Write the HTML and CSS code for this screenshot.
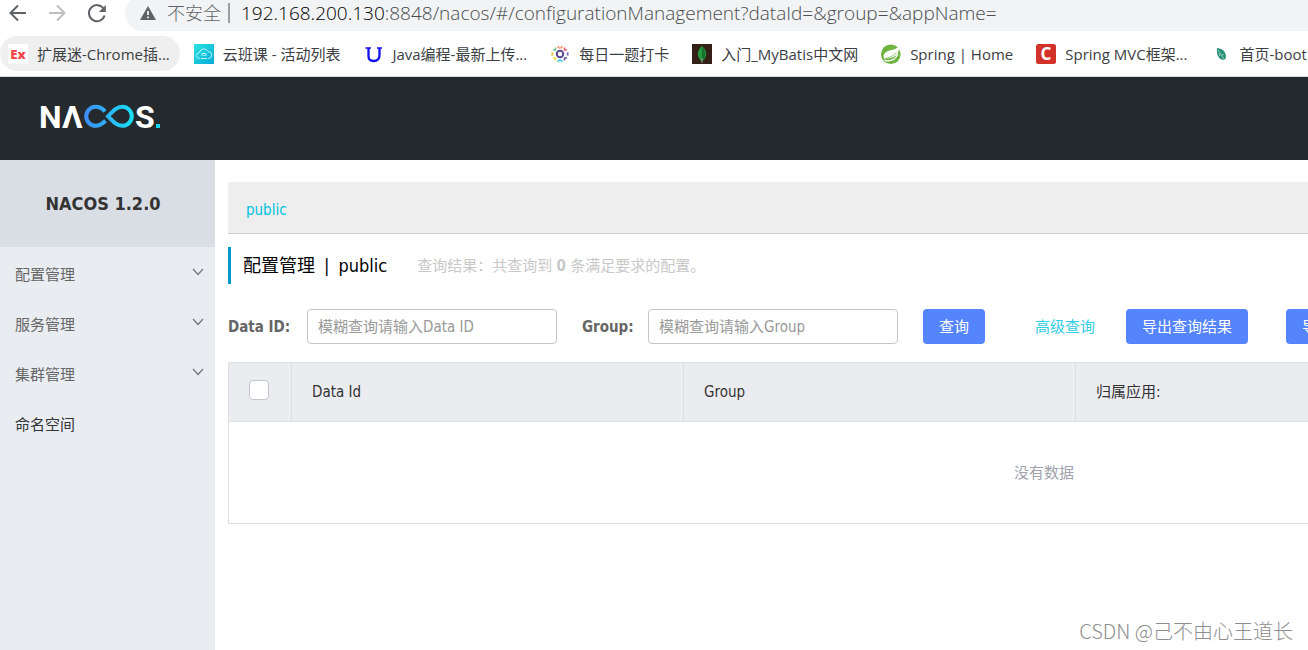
FILE: index.html
```
<!DOCTYPE html>
<html lang="zh-CN">
<head>
<meta charset="utf-8">
<title>Nacos</title>
<link rel="stylesheet" href="styles.css">
</head>
<body>
<div class="toolbar">
  <button class="nav-btn" aria-label="后退"><svg width="20" height="20" viewBox="0 0 20 20" fill="none" stroke="#5f6368" stroke-width="2"><path d="M18 10H3M10 2.500L2.500 10L10 17.500"/></svg></button>
  <button class="nav-btn" aria-label="前进"><svg width="20" height="20" viewBox="0 0 20 20" fill="none" stroke="#bdbfc2" stroke-width="2"><path d="M2 10H17M10 2.500L17.500 10L10 17.500"/></svg></button>
  <button class="nav-btn" aria-label="刷新"><svg width="20" height="20" viewBox="0 0 20 20"><path d="M17.500 5.500A8 8 0 1 0 18.600 12.500" fill="none" stroke="#5f6368" stroke-width="2"/><path d="M19.800 2V9H12.800Z" fill="#5f6368"/></svg></button>
  <div class="address">
    <svg width="16" height="14" viewBox="0 0 16 14"><path d="M8 0L16 14H0Z" fill="#5f6368"/><path d="M8 5V9M8 10.500V12.200" stroke="#f1f3f4" stroke-width="1.800"/></svg>
    <span class="insecure">不安全</span>
    <span class="divider"></span>
    <span class="url"><span class="host">192.168.200.130</span>:8848/nacos/#/configurationManagement?dataId=&amp;group=&amp;appName=</span>
  </div>
</div>
<nav class="bookmarks">
  <a class="bookmark active" href="#"><svg width="20" height="20" viewBox="0 0 20 20"><rect width="20" height="20" fill="#fff"/><text x="10" y="15" class="ico-ex">Ex</text></svg>扩展迷-Chrome插...</a>
  <a class="bookmark" href="#"><svg width="20" height="20" viewBox="0 0 20 20"><defs><linearGradient id="cloud" x1="0" y1="0" x2="1" y2="1"><stop offset="0" stop-color="#2be4e0"/><stop offset="1" stop-color="#08a9d8"/></linearGradient></defs><rect width="20" height="20" fill="url(#cloud)"/><path d="M6 14.500H5.500A3 3 0 0 1 5.500 8.500A4.500 4.500 0 0 1 14 7.500A3.500 3.500 0 0 1 14.500 14.500H14M7 14.500H13M8 12V9.500H12V12M9.500 11.500H11" fill="none" stroke="#b9f6fa"/></svg>云班课 - 活动列表</a>
  <a class="bookmark" href="#"><svg width="20" height="20" viewBox="0 0 20 20" fill="none" stroke="#1010f5"><path d="M2.500 4H8M14 4H19" stroke-width="1.500"/><path d="M5.500 4V12Q5.500 17 10.500 17Q16.500 17 16.500 11V4" stroke-width="2.300"/></svg>Java编程-最新上传...</a>
  <a class="bookmark" href="#"><svg width="20" height="20" viewBox="0 0 20 20" fill="none" stroke-width="1.600"><circle cx="10" cy="10" r="3.200" stroke="#5b4a91" stroke-width="2"/><path d="M8 2Q8 4 10 4Q12 4 12 2" stroke="#f59a76"/><path d="M14.500 3.500V6H17" stroke="#ee5f7b"/><path d="M18.500 8.500Q16 10 18.500 11.500" stroke="#8c72c0"/><path d="M14.500 16.500V14H17" stroke="#6e58a8"/><path d="M8 18Q8 16 10 16Q12 16 12 18" stroke="#46cfe6"/><path d="M5.500 16.500V14H3" stroke="#e8e12c"/><path d="M1.500 8.500Q4 10 1.500 11.500" stroke="#e0c84c"/><path d="M5.500 3.500V6H3" stroke="#67c78b"/></svg>每日一题打卡</a>
  <a class="bookmark" href="#"><svg width="20" height="20" viewBox="0 0 20 20"><rect width="20" height="20" fill="#352017"/><path d="M10 2C4 7 5 14 10 17.500C15 14 16 7 10 2Z" fill="#249a3f"/><path d="M10 2C14 7 14 14 10 17.500Z" fill="#146e2c"/><path d="M10 14V19" stroke="#9aa292"/></svg>入门_MyBatis中文网</a>
  <a class="bookmark" href="#"><svg width="20" height="20" viewBox="0 0 20 20"><circle cx="9.800" cy="10.200" r="9.800" fill="#6db33f"/><path d="M17.800 1.500C15.500 6 11 5.500 7 7C3 8.500 1.500 12 3.500 15C8 14 13 14.500 16.500 9.500C18 7 18.500 4 17.800 1.500Z" fill="#fff"/><path d="M3.500 16.500C9 17.500 14 16.500 17 10" fill="none" stroke="#fff" stroke-width="1.300"/><path d="M4 14.500C8 13.800 12 12.500 15 8.500" fill="none" stroke="#6db33f" stroke-width=".8"/></svg>Spring | Home</a>
  <a class="bookmark" href="#"><svg width="20" height="20" viewBox="0 0 20 20"><rect width="20" height="20" rx="2.500" fill="#d3322a"/><text x="10" y="16" class="ico-c">C</text></svg>Spring MVC框架...</a>
  <a class="bookmark" href="#"><svg width="20" height="20" viewBox="0 0 20 20"><path d="M6 4C13 5 16 9 14.500 15C10 17.500 5 13 6 4Z" fill="#279078"/><path d="M7 6L13 15M9 9L8.500 12M10.500 11.500L13 10" stroke="#b7ddd1" stroke-width=".7"/></svg>首页-boot</a>
</nav>
<header class="header">
  <svg class="logo" width="122" height="26" viewBox="0 0 122 26" role="img" aria-label="NACOS.">
    <defs><linearGradient id="loop" gradientUnits="userSpaceOnUse" x1="44" y1="0" x2="94" y2="0"><stop offset="0" stop-color="#3f8cff"/><stop offset="1" stop-color="#18e0f2"/></linearGradient></defs>
    <text class="logo-text" x="-1" y="24">N</text>
    <text class="logo-text" x="22" y="24">Λ</text>
    <path d="M65 7.500C62.500 4.500 59.500 2.800 55.700 2.800A9.500 9.500 0 0 0 55.700 21.800C59.500 21.800 62 20 65.500 16.700M82.300 2.800C77 2.800 74 6 68 12.300C74 18.600 77 21.800 82.300 21.800A9.500 9.500 0 0 0 82.300 2.800Z" fill="none" stroke="url(#loop)" stroke-width="4"/>
    <text class="logo-text" x="95" y="24">S</text>
    <rect x="116" y="20" width="4" height="4" fill="#18d4ec"/>
  </svg>
</header>
<div class="layout">
  <aside class="sidebar">
    <h1 class="version">NACOS 1.2.0</h1>
    <nav class="menu">
      <a class="menu-item" href="#">配置管理<svg width="12" height="12" viewBox="0 0 12 12"><path d="M1 2L6 7.500L11 2"/></svg></a>
      <a class="menu-item" href="#">服务管理<svg width="12" height="12" viewBox="0 0 12 12"><path d="M1 2L6 7.500L11 2"/></svg></a>
      <a class="menu-item" href="#">集群管理<svg width="12" height="12" viewBox="0 0 12 12"><path d="M1 2L6 7.500L11 2"/></svg></a>
      <a class="menu-item leaf" href="#">命名空间</a>
    </nav>
  </aside>
  <main class="main">
    <div class="namespaces"><a class="namespace" href="#">public</a></div>
    <div class="title">
      <h2 class="title-text"><span>配置管理</span><span>|</span><span>public</span></h2>
      <span class="result">查询结果：共查询到 <strong>0</strong> 条满足要求的配置。</span>
    </div>
    <form class="search">
      <label class="label" for="data-id">Data ID:</label>
      <input class="input" id="data-id" type="text" placeholder="模糊查询请输入Data ID">
      <label class="label group-label" for="group">Group:</label>
      <input class="input" id="group" type="text" placeholder="模糊查询请输入Group">
      <button class="btn query" type="button">查询</button>
      <a class="advanced" href="#">高级查询</a>
      <button class="btn" type="button">导出查询结果</button>
      <button class="btn import" type="button">导入配置</button>
    </form>
    <table class="table">
      <thead>
        <tr><th class="check-cell"><input class="check" type="checkbox" aria-label="全选"></th><th>Data Id</th><th>Group</th><th>归属应用:</th><th>操作</th></tr>
      </thead>
      <tbody>
        <tr><td class="empty" colspan="5">没有数据</td></tr>
      </tbody>
    </table>
  </main>
</div>
<div class="watermark">CSDN @己不由心王道长</div>
</body>
</html>
```
FILE: styles.css
```
* { box-sizing: border-box; }
body {
  margin: 0;
  min-height: 100vh;
  display: flex;
  flex-direction: column;
  position: relative;
  overflow: hidden;
  background: #fff;
  color: #333;
  font: 15px/20px "DejaVu Sans Condensed", "Noto Sans CJK SC", sans-serif;
}
a { color: inherit; text-decoration: none; }
svg { flex: none; }
button, input { font: inherit; }

.toolbar { display: flex; gap: 19px; height: 31px; padding-left: 8px; padding-bottom: 5px; align-items: center; }
.nav-btn { display: flex; flex: none; padding: 0; border: 0; background: none; }
.address {
  display: flex;
  flex: 1;
  align-items: center;
  height: 36px;
  min-width: 0;
  padding-left: 15px;
  border-radius: 18px 0 0 18px;
  background: #f1f3f4;
  color: #5f6368;
  font-family: "Open Sans", "Noto Sans CJK SC", sans-serif;
  white-space: nowrap;
}
.insecure { margin-left: 11px; font-size: 18px; font-weight: 300; }
.divider { width: 2px; height: 20px; margin: 0 11px 0 7px; background: #9a9da1; }
.url { font-size: 19px; font-weight: 300; color: #4a4d51; }
.host { color: #000; }

.bookmarks {
  display: flex;
  gap: 6px;
  height: 46px;
  padding: 5px 0;
  border-bottom: 1px solid #d5d7da;
  font-family: "Open Sans", "Noto Sans CJK SC", sans-serif;
  color: #3c4043;
  overflow: hidden;
}
.bookmark { display: flex; flex: none; align-items: center; gap: 9px; height: 35px; padding: 0 9px 0 8px; border-radius: 18px; white-space: nowrap; }
.bookmark.active { padding-right: 10px; background: #efefef; }
.ico-ex { font: 900 13px "Open Sans", sans-serif; fill: #f4484a; text-anchor: middle; }
.ico-c { font: 700 17px "Open Sans", sans-serif; fill: #fff; text-anchor: middle; }

.header { display: flex; align-items: center; height: 83px; padding: 0 40px 4px; background: #252a2f; }
.logo { overflow: visible; }
.logo-text { font: 700 32px Roboto, sans-serif; fill: #fff; }

.layout { display: flex; flex: 1; }
.sidebar { flex: none; width: 215px; background: #e9edf2; }
.version { margin: 0; height: 87px; padding-right: 9px; background: #d9dde4; font-size: 18px; line-height: 87px; text-align: center; }
.menu { padding-top: 3px; color: #666; }
.menu-item { display: flex; align-items: center; justify-content: space-between; height: 50px; padding: 0 11px 0 15px; }
.menu-item svg { margin-bottom: 4px; fill: none; stroke: #6c747e; stroke-width: 1.2; }
.menu-item.leaf { color: #333; }

.main { flex: 1; min-width: 0; padding: 22px 0 0 13px; overflow: hidden; }
.namespaces { height: 52px; padding: 18px; border-bottom: 1px solid #ccc; background: #eee; }
.namespace { color: #00c1de; }
.title { display: flex; align-items: center; gap: 30px; height: 37px; margin-top: 13px; padding-left: 12px; border-left: 3px solid #09c; white-space: nowrap; }
.title-text { display: flex; gap: 9px; margin: 0; color: #000; font-size: 18px; font-weight: 400; }
.result { color: #c8c8c8; }

.search { display: flex; align-items: center; margin-top: 25px; white-space: nowrap; }
.search > * { flex: none; }
.label { width: 64px; margin-right: 15px; color: #666; font-weight: 700; }
.group-label { width: 51px; margin-left: 25px; }
.input { width: 250px; height: 35px; padding: 0 10px; border: 1px solid #c4c6cf; border-radius: 4px; background: #fff; color: #333; }
.input::placeholder { color: #999; opacity: 1; }
.btn { height: 35px; padding: 0 16px; border: 0; border-radius: 4px; background: #5584ff; color: #fff; }
.query { margin-left: 25px; }
.advanced { margin: 0 31px 0 50px; color: #33cde5; }
.import { margin-left: 38px; }

.table { width: 1632px; margin-top: 18px; table-layout: fixed; border-collapse: collapse; }
.table th { height: 59px; padding: 0 20px; border: 1px solid #dcdee3; background: #ebecf0; font-weight: 400; text-align: left; }
.table .check-cell { width: 63px; }
.check { display: block; appearance: none; width: 20px; height: 20px; margin: 0 0 4px; border: 1px solid #c4c6cf; border-radius: 4px; background: #fff; }
.empty { height: 102px; padding: 0; border: 1px solid #dcdee3; color: #a0a2ad; text-align: center; }

.watermark { position: absolute; right: 15px; bottom: 7px; color: #8e8e8e; font: 300 20px/24px "Noto Sans CJK SC", sans-serif; }
```
